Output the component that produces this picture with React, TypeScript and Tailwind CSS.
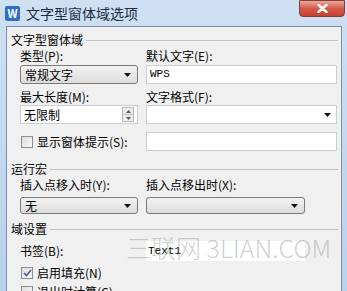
import React from "react";

const font = { fontFamily: '"Noto Sans CJK SC", "Noto Sans", sans-serif' };

const Arrow = () => (
  <svg width="7" height="4" viewBox="0 0 7 4" className="shrink-0">
    <path d="M0 0h7L3.5 4z" fill="#111" />
  </svg>
);

const GroupHeader = ({ title }: { title: string }) => (
  <div className="flex items-center h-[16px] pl-[4px] pr-[3px]">
    <span className="text-[12px] leading-none text-black">{title}</span>
    <div className="flex-1 ml-[3px] border-t border-[#bcc3ca] h-0" />
  </div>
);

const Checkbox = ({ checked }: { checked?: boolean }) => (
  <div className="w-[12px] h-[12px] border border-[#8f8f8f] bg-gradient-to-br from-[#dcdcdc] to-[#f8f8f8] flex items-center justify-center shrink-0">
    {checked && (
      <svg width="9" height="8" viewBox="0 0 9 8">
        <path d="M1 4l2.5 2.5L8 1" stroke="#4a5f97" strokeWidth="1.6" fill="none" />
      </svg>
    )}
  </div>
);

export default function App() {
  return (
    <div
      className="w-[347px] h-[291px] overflow-hidden flex flex-col bg-gradient-to-b from-[#cfe0f3] to-[#b9d1ea]"
      style={font}
    >
      {/* 标题栏 */}
      <div className="h-[26px] flex items-start shrink-0">
        <div className="mt-[6px] ml-[5px] w-[15px] h-[15px] bg-[#2c6fc4] rounded-[2px] flex items-center justify-center">
          <span className="text-white text-[11px] font-bold leading-none">W</span>
        </div>
        <span className="mt-[4px] ml-[6px] text-[14px] leading-[18px] text-[#1b2b44]">文字型窗体域选项</span>
        <div className="ml-auto mr-[2px] w-[46px] h-[17px] rounded-b-[4px] border border-[#8c3a36] bg-gradient-to-b from-[#e9a99c] via-[#d3594a] to-[#c4402f] flex items-center justify-center">
          <svg width="11" height="9" viewBox="0 0 11 9">
            <path d="M1.5 1l8 7M9.5 1l-8 7" stroke="#fff" strokeWidth="2.4" strokeLinecap="round" />
          </svg>
        </div>
      </div>

      {/* 客户区 */}
      <div className="relative ml-[6px] mr-[5px] flex-1 bg-[#f0f0f0] border-l border-t border-r border-[#7d90a8] flex flex-col text-[12px] leading-none text-black">
        <div className="mt-[5px]">
          <GroupHeader title="文字型窗体域" />
        </div>

        <div className="grid grid-cols-[118px_191px] gap-x-[8px] pl-[13px]">
          <div className="h-[16px] flex items-center">类型(P):</div>
          <div className="h-[16px] flex items-center">默认文字(E):</div>

          <div className="mt-[1px] h-[19px] rounded-[3px] border border-[#7a7a7a] bg-gradient-to-b from-[#f2f2f2] to-[#dcdcdc] flex items-center pl-[4px] pr-[6px]">
            <span className="flex-1">常规文字</span>
            <Arrow />
          </div>
          <div className="mt-[1px] h-[19px] bg-white border border-[#c9cfd6] flex items-center pl-[3px]">
            <span className="text-[11px]" style={{ fontFamily: '"Liberation Mono", monospace' }}>WPS</span>
          </div>

          <div className="mt-[5px] h-[16px] flex items-center">最大长度(M):</div>
          <div className="mt-[5px] h-[16px] flex items-center">文字格式(F):</div>

          <div className="h-[19px] bg-white border border-[#c9cfd6] flex items-center pl-[3px] pr-[3px]">
            <span className="flex-1">无限制</span>
            <div className="w-[12px] h-[15px] flex flex-col border border-[#b9b9b9] bg-[#ececec]">
              <div className="flex-1 flex items-center justify-center border-b border-[#c4c4c4]">
                <svg width="5" height="3" viewBox="0 0 5 3"><path d="M0 3h5L2.5 0z" fill="#555" /></svg>
              </div>
              <div className="flex-1 flex items-center justify-center">
                <svg width="5" height="3" viewBox="0 0 5 3"><path d="M0 0h5L2.5 3z" fill="#555" /></svg>
              </div>
            </div>
          </div>
          <div className="h-[19px] bg-white border border-[#c9cfd6] flex items-center justify-end pr-[5px]">
            <Arrow />
          </div>

          <div className="mt-[8px] h-[19px] flex items-center gap-[4px] pl-[1px]">
            <Checkbox />
            <span>显示窗体提示(S):</span>
          </div>
          <div className="mt-[8px] h-[19px] bg-white border border-[#c9cfd6]" />
        </div>

        <div className="mt-[10px]">
          <GroupHeader title="运行宏" />
        </div>

        <div className="grid grid-cols-[118px_159px] gap-x-[8px] pl-[13px]">
          <div className="h-[16px] flex items-center">插入点移入时(Y):</div>
          <div className="h-[16px] flex items-center">插入点移出时(X):</div>

          <div className="mt-[4px] h-[17px] rounded-[3px] border border-[#7a7a7a] bg-gradient-to-b from-[#f2f2f2] to-[#dcdcdc] flex items-center pl-[4px] pr-[6px]">
            <span className="flex-1">无</span>
            <Arrow />
          </div>
          <div className="mt-[4px] h-[17px] rounded-[3px] border border-[#7a7a7a] bg-gradient-to-b from-[#f2f2f2] to-[#dcdcdc] flex items-center justify-end pr-[6px]">
            <Arrow />
          </div>
        </div>

        <div className="mt-[7px]">
          <GroupHeader title="域设置" />
        </div>

        <div className="grid grid-cols-[118px_159px] gap-x-[8px] pl-[13px]">
          <div className="mt-[4px] h-[20px] flex items-center">书签(B):</div>
          <div className="mt-[4px] h-[20px] bg-white flex items-center pl-[2px]">
            <span className="text-[11px]" style={{ fontFamily: '"Liberation Mono", monospace' }}>Text1</span>
          </div>
        </div>

        <div className="flex flex-col gap-[7px] pl-[14px] mt-[6px]">
          <div className="h-[12px] flex items-center gap-[4px]">
            <Checkbox checked />
            <span>启用填充(N)</span>
          </div>
          <div className="h-[12px] flex items-center gap-[4px]">
            <Checkbox />
            <span>退出时计算(C)</span>
          </div>
        </div>

        {/* 水印 */}
        <div
          className="absolute left-[119px] top-[208px] text-[25px] leading-none text-[rgba(140,140,140,0.42)] font-light pointer-events-none whitespace-nowrap"
          style={{ fontFamily: '"Noto Sans CJK SC", sans-serif' }}
        >
          三联网 3LIAN.COM
        </div>
      </div>
    </div>
  );
}
